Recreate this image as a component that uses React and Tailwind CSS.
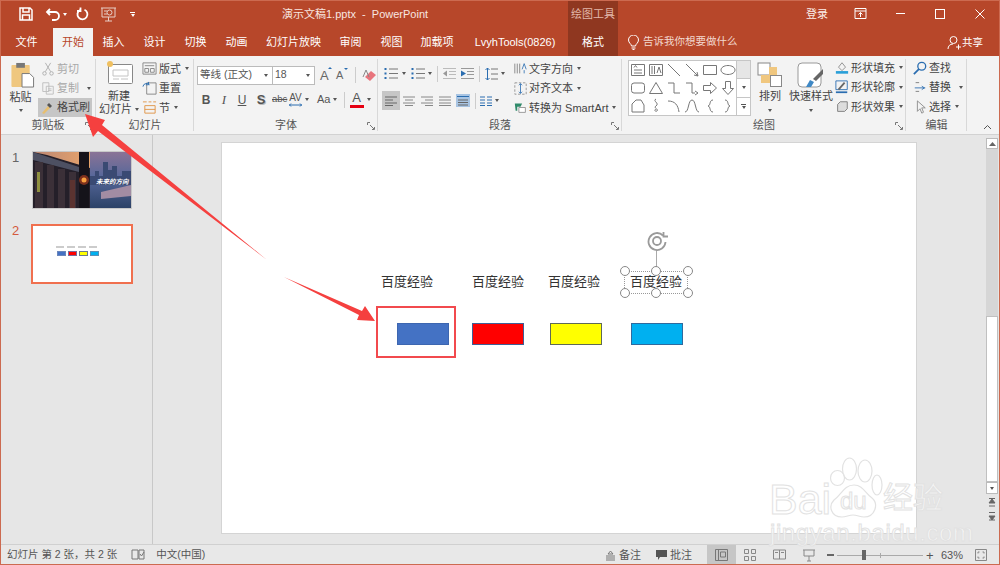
import React from "react";

const Cn = ({ children, className = "" }) => <span className={"whitespace-nowrap " + className}>{children}</span>;
const Caret = ({ className = "" }) => <span className={"inline-block w-0 h-0 border-l-[2.5px] border-r-[2.5px] border-t-[3px] border-l-transparent border-r-transparent border-t-[#555] align-middle shrink-0 " + className} />;
const CaretW = ({ className = "" }) => <span className={"inline-block w-0 h-0 border-l-[2.5px] border-r-[2.5px] border-t-[3px] border-l-transparent border-r-transparent border-t-white shrink-0 " + className} />;

const Tab = ({ children, active, w }) => (
  <div className={"flex items-center justify-center text-[11px] h-full " + (active ? "bg-[#f3f3f3] text-[#b7472a]" : "text-white")} style={{ width: w }}>{children}</div>
);

const Small = ({ icon, label, caret, dim, caretGap = "ml-[2px]" }) => (
  <div className={"flex items-center gap-[2px] h-[19.5px] text-[11px] " + (dim ? "text-[#a8a8a8]" : "text-[#444]")}>
    {icon}<Cn>{label}</Cn>{caret && <Caret className={caretGap} />}
  </div>
);

const Ico = ({ children, s = 16, vb = 16 }) => (
  <svg width={s} height={s} viewBox={`0 0 ${vb} ${vb}`} fill="none" stroke="#666" strokeWidth="1" className="shrink-0">{children}</svg>
);

const Launcher = () => (
  <svg width="8" height="8" viewBox="0 0 8 8" fill="none" stroke="#777" className="absolute right-[3px] bottom-[4px]"><path d="M.5 3V.5H3M7.500 5v2.500H5M3 3l4 4" /></svg>
);

const Group = ({ w, label, launcher, children }) => (
  <div className="relative flex flex-col h-full shrink-0" style={{ width: w }}>
    <div className="flex-1 min-h-0 flex">{children}</div>
    <div className="h-[15px] mb-[1px] flex items-center justify-center text-[11px] text-[#555]">{label}</div>
    <span className="absolute right-0 top-[3px] bottom-[3px] w-px bg-[#d8d8d8]" />
    {launcher && <Launcher />}
  </div>
);

const Shape = ({ d }) => (
  <svg width="18" height="18" viewBox="0 0 18 18" fill="none" stroke="#777" strokeWidth="1"><path d={d} /></svg>
);
const shapes = [
  "M2.500 3.500h13v11h-13zM5 6.500l1.500-2 1.500 2M5 9h8M5 12h8",
  "M2.500 3.500h13v11h-13zM5 5v8M7.500 5v8M10 12l2-6 2 6",
  "M3 3l12 12",
  "M3 3l12 12M15 15l-4-1M15 15l-1-4",
  "M2.500 4.500h13v9h-13z",
  "M9 4.500c4 0 7 2 7 4.500s-3 4.500-7 4.500-7-2-7-4.500 3-4.500 7-4.500z",
  "M5 4h8a2.500 2.500 0 012.500 2.500v5A2.500 2.500 0 0113 14H5a2.500 2.500 0 01-2.500-2.500v-5A2.500 2.500 0 015 4z",
  "M9 3.500l6.500 11h-13z",
  "M3 4h6v10h6",
  "M3 4h6v10h3M12 12l3 2-3 2",
  "M2.500 6.500h7v-3l6 5.500-6 5.500v-3h-7z",
  "M6.500 2.500h5v7h3L9 15.500 3.500 9.500h3z",
  "M3 15V7l4-4h5l3 5v7z",
  "M9 2c-4 2 4 4 0 7-3 2 3 3 1 5-2 1-3-1-1-2",
  "M3 4c7 0 10 4 11 11",
  "M2 15c4 0 3-12 7-12s3 12 7 12",
  "M12 3c-4 0-2 5.500-5 6 3 .5 1 6 5 6",
  "M6 3c4 0 2 5.500 5 6-3 .5-1 6-5 6",
];

const Thumb = ({ n, active, children }) => (
  <div className="flex h-[60px]">
    <div className={"w-[31px] pl-[12px] text-[13px] leading-none " + (active ? "text-[#d4593c]" : "text-[#666]")}>{n}</div>
    {children}
  </div>
);

const Label = ({ left }) => (
  <span className="absolute top-[130px] text-[13px] leading-[17px] text-[#333] whitespace-nowrap" style={{ left }}>百度经验</span>
);
const Box = ({ left, fill, stroke }) => (
  <div className="absolute top-[180px] w-[52px] h-[22px] border" style={{ left, background: fill, borderColor: stroke }} />
);
const Handle = ({ x, y }) => (
  <span className="absolute w-[10px] h-[10px] rounded-full bg-white border border-[#888]" style={{ left: x - 5, top: y - 5 }} />
);

function ArrowHeads() {
  return (
    <svg width="1000" height="565" viewBox="0 0 1000 565" className="absolute left-0 top-0 pointer-events-none">
      <path d="M267 260 L102 125 L105 120 L85 114 L93 137 L98 131 Z" fill="#f5403f" />
      <path d="M284 277 L362 311 L365 306 L375 321 L357 320 L359 315 Z" fill="#f5403f" />
    </svg>
  );
}

function Watermark() {
  const stroke = "[-webkit-text-stroke:1px_#e2e2e2]";
  return (
    <div className="absolute left-[766px] top-[455px] w-[200px] h-[95px] pointer-events-none">
      <svg width="62" height="66" viewBox="0 0 62 66" className="absolute left-[58px] top-0" fill="#ffffff" fillOpacity=".55" stroke="#e2e2e2" strokeWidth="1.200">
        <ellipse cx="13.500" cy="23" rx="7" ry="7.500" /><ellipse cx="25.500" cy="14" rx="7" ry="11" /><ellipse cx="41" cy="16" rx="7" ry="11" /><ellipse cx="53" cy="30" rx="5" ry="10" />
        <path d="M30 30c9 0 11 8 18 13 7 6 3 19-8 19-4 0-7-2-11-2-4 0-7 2-11 2-11 0-14-11-8-17 8-6 10-15 20-15z" />
      </svg>
      <span className={"absolute left-[3px] top-[23px] text-[43px] leading-[43px] font-['Liberation_Sans'] text-white/75 " + stroke}>Bai</span>
      <span className={"absolute left-[74px] top-[34px] text-[24px] leading-[24px] font-['Liberation_Sans'] text-white/80 " + stroke}>du</span>
      <span className={"absolute left-[117px] top-[27px] text-[30px] leading-[32px] text-white/70 " + stroke}>经验</span>
      <span className={"absolute left-[4px] top-[66px] text-[24px] leading-[24px] font-['Liberation_Sans'] text-white/70 tracking-[.6px] whitespace-nowrap " + stroke}>jingyan.baidu.com</span>
    </div>
  );
}

function Photo() {
  return (
    <div className="relative w-[98px] h-[56px] ml-[2px] mt-[1px] outline outline-1 outline-[#c8c8c8] overflow-hidden">
      <svg width="98" height="56" viewBox="0 0 98 56" className="block">
        <defs>
          <linearGradient id="s1" x1="0" y1="0" x2="1" y2="0"><stop offset="0" stopColor="#b98674" /><stop offset="1" stopColor="#e9a56c" /></linearGradient>
          <linearGradient id="s2" x1="0" y1="0" x2="0" y2="1"><stop offset="0" stopColor="#8a7396" /><stop offset=".45" stopColor="#56679a" /><stop offset="1" stopColor="#2c4267" /></linearGradient>
        </defs>
        <rect width="57" height="56" fill="#241f29" />
        <path d="M0 0h57v16L14 3z" fill="url(#s1)" />
        <path d="M0 0l46 15v5L0 8z" fill="#4d5062" />
        <path d="M2 10h8v46H2zM14 13h7v43h-7zM25 17h7v39h-7zM36 20h7v36h-7z" fill="#3b3038" />
        <path d="M4 20h3v20H4z" fill="#8f9040" />
        <path d="M37 28h5v28h-5z" fill="#5b3330" />
        <rect x="57" width="41" height="56" fill="url(#s2)" />
        <path d="M57 24h5v-5h4v5h4V10h5v8h4v-4h5v10h5v-5h9v14H57z" fill="#3a4a73" />
        <path d="M68 40l30-7v11l-30 3z" fill="#a28ca3" />
        <rect x="46" y="0" width="10" height="56" fill="#15131a" />
        <circle cx="51" cy="28" r="5" fill="#c2441f" fillOpacity=".6" />
        <circle cx="51" cy="28" r="2.500" fill="#f9a03f" />
      </svg>
      <span className="absolute left-[63px] top-[25px] text-[6.500px] leading-[9px] text-white italic font-bold whitespace-nowrap">未来的方向</span>
    </div>
  );
}

export default function App() {
  return (
    <div className="relative w-[1000px] h-[565px] overflow-hidden flex flex-col bg-[#e6e6e6] font-['Liberation_Sans','Noto_Sans_CJK_SC',sans-serif] select-none">
      {/* title bar */}
      <div className="h-[28px] bg-[#b7472a] flex items-center text-white shrink-0 relative">
        <div className="flex items-center w-[282px] pl-[19px] shrink-0">
          <svg width="14" height="14" viewBox="0 0 14 14" fill="none" stroke="#fff" strokeWidth="1.500"><path d="M1 1h10l2 2v10H1zM4 1v4h6V1M3.500 13V8h7v5" /></svg>
          <svg width="15" height="13" viewBox="0 0 15 13" fill="none" stroke="#fff" strokeWidth="1.800" className="ml-[12px]"><path d="M5 1L2 4l3 3M2 4h8a3.800 3.800 0 010 8H7" /></svg>
          <CaretW className="ml-[3px]" />
          <svg width="13" height="14" viewBox="0 0 13 14" fill="none" stroke="#fff" strokeWidth="1.800" className="ml-[9px]"><path d="M8.500 2.800a5 5 0 11-4.500.2M4.500 .5v3.500H1" /></svg>
          <svg width="15" height="15" viewBox="0 0 15 15" fill="none" stroke="#e8d0c8" strokeWidth="1" className="ml-[12px]"><path d="M0 1h15M1 1v9h13V1M7.500 10v4M4 14h7" /><circle cx="8.500" cy="5.500" r="2.500" /><path d="M3 4h3M3 7h3" /></svg>
          <div className="flex flex-col items-center gap-[1px] ml-[14px]"><span className="w-[5px] h-px bg-white" /><CaretW /></div>
        </div>
        <Cn className="text-[11px] text-[#f7e6e0]">演示文稿1.pptx&nbsp; -&nbsp; PowerPoint</Cn>
        <div className="absolute left-[568px] top-[1px] w-[50px] h-[27px] bg-[#8f3720] flex items-center justify-center text-[11px] text-[#e2b8ab]"><Cn>绘图工具</Cn></div>
        <Cn className="absolute left-[806px] top-[6px] text-[11px] text-[#fbeee9]">登录</Cn>
        <svg width="13" height="11" viewBox="0 0 13 11" fill="none" stroke="#fff" className="absolute left-[854px] top-[8px]"><path d="M1 .5h11v10H1zM1 3h11M6.500 9V4.500M4.500 6.500l2-2 2 2" /></svg>
        <span className="absolute left-[896px] top-[13px] w-[9px] h-px bg-white" />
        <span className="absolute left-[935px] top-[9px] w-[10px] h-[10px] border border-white" />
        <svg width="10" height="10" viewBox="0 0 10 10" stroke="#fff" className="absolute left-[975px] top-[9px]"><path d="M.5.5l9 9M9.500.5l-9 9" /></svg>
      </div>
      {/* tabs */}
      <div className="h-[28px] bg-[#b7472a] flex items-stretch shrink-0 relative">
        <Tab w={53}>文件</Tab>
        <Tab active w={40}>开始</Tab>
        <Tab w={41}>插入</Tab>
        <Tab w={41}>设计</Tab>
        <Tab w={41}>切换</Tab>
        <Tab w={41}>动画</Tab>
        <Tab w={73}>幻灯片放映</Tab>
        <Tab w={41}>审阅</Tab>
        <Tab w={41}>视图</Tab>
        <Tab w={50}>加载项</Tab>
        <Tab w={106}>LvyhTools(0826)</Tab>
        <div className="w-[50px] bg-[#8f3720] text-white text-[11px] flex items-center justify-center">格式</div>
        <div className="flex items-center ml-[10px] gap-[4px] text-[10.500px] text-[#f3d9d0]">
          <svg width="11" height="15" viewBox="0 0 11 15" fill="none" stroke="#fff"><path d="M3.500 11c0-2-3-3-3-6a5 5 0 0110 0c0 3-3 4-3 6zM3.500 13h4M4.500 14.500h2" /></svg>
          <Cn>告诉我你想要做什么</Cn>
        </div>
        <div className="absolute right-[17px] top-[7px] flex items-center gap-[1px] text-[10.500px] text-white">
          <svg width="14" height="15" viewBox="0 0 14 15" fill="none" stroke="#fff"><circle cx="6.500" cy="5" r="3.500" /><path d="M1 14c0-3 2-5 5-5M9 12h5M11.500 9.500v5" /></svg>
          <Cn>共享</Cn>
        </div>
      </div>
      {/* ribbon */}
      <div className="h-[79px] bg-[#f3f3f3] border-b border-[#d2d2d2] flex shrink-0 relative">
        <Group w={96} label="剪贴板" launcher>
          <div className="w-[41px] flex flex-col items-center pt-[6px] text-[11px] text-[#444] shrink-0">
            <svg width="25" height="26" viewBox="0 0 25 27" className="ml-[4px]"><rect x="1" y="3" width="19" height="23" rx="1" fill="#efc77f" /><rect x="6" y="1" width="9" height="5" fill="#777" /><path d="M12 12h8l4 4v10H12z" fill="#fff" stroke="#777" /></svg>
            <span className="mt-[1px] leading-[16px]">粘贴</span>
            <Caret className="mt-[4px]" />
          </div>
          <div className="flex flex-col pt-[3px]">
            <Small dim label="剪切" icon={<Ico s={14}><path d="M5 1l6 10M11 1L5 11" stroke="#aaa" /><circle cx="4" cy="13" r="2" stroke="#aaa" /><circle cx="12" cy="13" r="2" stroke="#aaa" /></Ico>} />
            <Small dim label="复制" caret caretGap="ml-[6px]" icon={<Ico s={14}><path d="M2 2h7v10H2zM6 6h8v9H6zM8 9h4M8 11h4" stroke="#bbb" /></Ico>} />
            <div className="flex items-center gap-[2px] h-[19px] w-[54px] ml-[-3px] bg-[#c6c6c6] text-[11px] text-[#444] pl-[3px]">
              <svg width="14" height="13" viewBox="0 0 14 13"><path d="M1 12l6-7 2 2-6 6z" fill="#e8bf6f" /><path d="M8 2l3 3-2 2-3-3z" fill="#555" /></svg>
              <Cn>格式刷</Cn>
            </div>
          </div>
        </Group>
        <Group w={98} label="幻灯片">
          <div className="w-[46px] flex flex-col items-center pt-[4px] text-[11px] text-[#444] leading-[13px] shrink-0">
            <svg width="27" height="25" viewBox="0 0 27 25" fill="none"><rect x="2.500" y="4.500" width="24" height="19" rx="1" fill="#fff" stroke="#888" /><path d="M7 10h15v6H7zM7 19h6M15 19h7" stroke="#c4c4c4" /><circle cx="4" cy="4" r="3" fill="#f0c060" /></svg>
            <Cn className="mt-[5px]">新建</Cn>
            <div className="flex items-center gap-[3px] whitespace-nowrap"><span>幻灯片</span><Caret /></div>
          </div>
          <div className="flex flex-col pt-[3px]">
            <Small label="版式" caret icon={<Ico s={15}><path d="M1 2h14v12H1zM3 5h10M3 8h4v4H3zM9 8h4v4H9z" stroke="#888" /></Ico>} />
            <Small label="重置" icon={<Ico s={15}><path d="M5 2h10v12H5z" stroke="#888" /><path d="M1 6a4 4 0 017-2M7 1v3H4" stroke="#2a6db0" /></Ico>} />
            <Small label="节" caret icon={<Ico s={15}><path d="M1 2h4M7 2h3M12 2h3M3 6h11v8H3zM3 10h11" stroke="#e0964a" /></Ico>} />
          </div>
        </Group>
        <Group w={184} label="字体" launcher>
          <div className="pl-[3px] pt-[9px] w-full">
            <div className="flex items-center h-[20px]">
              <div className="w-[76px] h-[19px] border border-[#bbb] bg-white text-[10.500px] text-[#555] flex items-center pl-[2px] justify-between pr-[4px] shrink-0"><Cn>等线 (正文)</Cn><Caret /></div>
              <div className="w-[42px] h-[19px] border border-l-0 border-[#bbb] bg-white text-[10.500px] text-[#555] flex items-center pl-[2px] justify-between pr-[4px] shrink-0"><span>18</span><Caret /></div>
              <span className="relative ml-[5px] w-[12px] text-[#666] text-[13px] leading-none">A<span className="absolute right-0 top-[-2px] w-0 h-0 border-l-[2px] border-r-[2px] border-b-[2px] border-l-transparent border-r-transparent border-b-[#2a6db0]" /></span>
              <span className="relative ml-[4px] w-[12px] text-[#666] text-[11px] leading-none">A<span className="absolute right-0 top-[-2px] w-0 h-0 border-l-[2px] border-r-[2px] border-t-[2px] border-l-transparent border-r-transparent border-t-[#2a6db0]" /></span>
              <span className="w-px h-[16px] bg-[#ccc] ml-[7px]" />
              <svg width="14" height="15" viewBox="0 0 14 15" className="ml-[6px]"><path d="M3 9l6-6 5 4-6 6z" fill="#e8747c" /><path d="M1 9l3-7 3 7" fill="none" stroke="#888" /></svg>
            </div>
            <div className="flex items-center h-[19px] mt-[5px] text-[#555]">
              <span className="w-[18px] text-center text-[12px] font-bold">B</span>
              <span className="w-[18px] text-center text-[13px] italic font-['Liberation_Serif']">I</span>
              <span className="w-[18px] text-center text-[12px] underline">U</span>
              <span className="w-[20px] text-center text-[13px] font-bold [text-shadow:1px_1px_0_#bbb]">S</span>
              <span className="w-[14px] ml-[1px] text-center line-through text-[9.500px]">abc</span>
              <div className="ml-[1px] w-[26px] flex items-center gap-[3px] pl-[2px]">
                <div className="flex flex-col items-center">
                  <span className="text-[10px] leading-[10px]">AV</span>
                  <svg width="13" height="4" viewBox="0 0 13 4" fill="none" stroke="#2a6db0"><path d="M0 2h13M2 .5L.5 2 2 3.500M11 .5L12.500 2 11 3.500" /></svg>
                </div>
                <Caret />
              </div>
              <div className="ml-[1px] w-[25px] flex items-center gap-[3px] pl-[3px] text-[11px]">Aa<Caret /></div>
              <span className="w-px h-[16px] bg-[#ccc] ml-[5px]" />
              <div className="flex flex-col items-center ml-[4px] w-[15px]">
                <span className="text-[13px] leading-[12px] text-[#555]">A</span>
                <span className="w-[14px] h-[3px] bg-[#e60012] mt-[1px]" />
              </div>
              <Caret className="ml-[3px]" />
            </div>
          </div>
        </Group>
        <Group w={244} label="段落" launcher>
          <div className="pl-[6px] pt-[7px] w-[136px] shrink-0">
            <div className="flex items-center h-[21px]">
              <svg width="14" height="13" viewBox="0 0 14 13" fill="none" stroke="#777" className="shrink-0"><path d="M5 2h9M5 6.500h9M5 11h9" /><path d="M1.500 1v2M1.500 5.500v2M1.500 10v2" stroke="#2a6db0" strokeWidth="2" /></svg>
              <Caret className="ml-[4px]" />
              <svg width="14" height="13" viewBox="0 0 14 13" fill="none" stroke="#777" className="ml-[5px] shrink-0"><path d="M5 2h9M5 6.500h9M5 11h9" /><path d="M1.500 1v2M1.500 5.500v2M1.500 10v2" stroke="#2a6db0" strokeWidth="2" /></svg>
              <Caret className="ml-[3px]" />
              <span className="w-px h-[16px] bg-[#ccc] ml-[5px] shrink-0" />
              <svg width="13" height="12" viewBox="0 0 13 12" fill="none" stroke="#bbb" className="ml-[5px] shrink-0"><path d="M0 .5h13M6 3.500h7M6 6.500h7M0 10.500h13" /><path d="M0 5.500l4-3v6z" fill="#999" stroke="none" /></svg>
              <svg width="13" height="12" viewBox="0 0 13 12" fill="none" stroke="#999" className="ml-[5px] shrink-0"><path d="M0 .5h13M6 3.500h7M6 6.500h7M0 10.500h13" /><path d="M5 5.500l-5-3v6z" fill="#2a6db0" stroke="none" /></svg>
              <span className="w-px h-[16px] bg-[#ccc] ml-[5px] shrink-0" />
              <svg width="13" height="14" viewBox="0 0 13 14" fill="none" stroke="#777" className="ml-[5px] shrink-0"><path d="M6 2h7M6 7h7M6 12h7" /><path d="M2.500 1v12M.5 3l2-2 2 2M.5 11l2 2 2-2" stroke="#2a6db0" /></svg>
              <Caret className="ml-[3px]" />
            </div>
            <div className="flex items-center h-[19px] mt-[7px] ml-[-2px]">
              <div className="w-[18px] h-[19px] bg-[#c6c6c6] flex items-center justify-center shrink-0"><svg width="12" height="10" viewBox="0 0 12 10" stroke="#666"><path d="M0 1h12M0 4h8M0 7h12M0 9.500h8" /></svg></div>
              <svg width="12" height="10" viewBox="0 0 12 10" stroke="#888" className="ml-[3px] shrink-0"><path d="M0 1h12M2 4h8M0 7h12M2 9.500h8" /></svg>
              <svg width="12" height="10" viewBox="0 0 12 10" stroke="#888" className="ml-[6px] shrink-0"><path d="M0 1h12M4 4h8M0 7h12M4 9.500h8" /></svg>
              <svg width="12" height="10" viewBox="0 0 12 10" stroke="#888" className="ml-[6px] shrink-0"><path d="M0 1h12M0 4h12M0 7h12M0 9.500h12" /></svg>
              <svg width="14" height="13" viewBox="0 0 14 13" className="ml-[5px] shrink-0"><rect width="14" height="13" fill="#a8c4e2" /><path d="M2 6h10M2 8.500h10M2 11h10" stroke="#666" /><path d="M1 2.500h12" stroke="#2a6db0" /></svg>
              <span className="w-px h-[16px] bg-[#ccc] ml-[5px] shrink-0" />
              <svg width="12" height="10" viewBox="0 0 12 10" stroke="#2a6db0" className="ml-[4px] shrink-0"><path d="M0 1h5M7 1h5M0 4h5M7 4h5M0 7h5M7 7h5M0 9.500h5M7 9.500h5" /></svg>
              <Caret className="ml-[3px]" />
            </div>
          </div>
          <div className="flex flex-col pt-[3px]">
            <Small label="文字方向" caret icon={<Ico s={13}><path d="M1 2v12M4 2v12M7 2v12" stroke="#777" /><path d="M10 9l2.500-7L15 9M12.500 10v4" stroke="#2a6db0" /></Ico>} />
            <Small label="对齐文本" caret icon={<Ico s={13}><path d="M1 1h14v14H1z" stroke="#888" strokeDasharray="3 2" /><path d="M8 2v12M6 4l2-2 2 2M6 12l2 2 2-2" stroke="#2a6db0" /></Ico>} />
            <Small label="转换为 SmartArt" caret icon={<Ico s={13}><path d="M1 3h9l-2 4H4v5H2z" fill="#2f8a6a" stroke="none" /><path d="M6 8h8v6H6z" fill="#fff" stroke="#888" /></Ico>} />
          </div>
        </Group>
        <Group w={284} label="绘图" launcher>
          <div className="flex pl-[6px] pt-[4px] w-full">
            <div className="w-[109px] h-[56px] border border-[#c6c6c6] bg-white grid grid-cols-[repeat(6,18px)] content-start shrink-0">
              {shapes.map((d, i) => <Shape key={i} d={d} />)}
            </div>
            <div className="w-[14px] h-[56px] border-y border-r border-[#c6c6c6] flex flex-col bg-white shrink-0">
              <div className="flex-1 bg-[#e6e6e6] border-b border-[#c6c6c6]" />
              <div className="flex-1 flex items-center justify-center border-b border-[#c6c6c6]"><Caret /></div>
              <div className="flex-1 flex flex-col items-center justify-center gap-[1px]"><span className="w-[5px] h-px bg-[#555]" /><Caret /></div>
            </div>
            <div className="w-[38px] flex flex-col items-center pt-[2px] text-[11px] text-[#444] shrink-0">
              <svg width="26" height="25" viewBox="0 0 26 25"><rect x="1" y="1" width="12" height="12" fill="#fff" stroke="#888" /><rect x="12" y="5" width="8" height="8" fill="#f0c77f" /><rect x="4" y="13" width="9" height="8" fill="#f0c77f" /><rect x="13.500" y="13.500" width="11" height="11" fill="#fff" stroke="#888" /></svg>
              <Cn className="mt-[1px] leading-[16px]">排列</Cn>
              <Caret className="mt-[5px]" />
            </div>
            <div className="w-[44px] flex flex-col items-center pt-[2px] text-[11px] text-[#444] shrink-0">
              <svg width="28" height="26" viewBox="0 0 28 26"><rect x="1" y="1" width="23" height="24" rx="4" fill="#fff" stroke="#999" /><path d="M9 25l4-7 4 2-3 5z" fill="#3f88c5" /><path d="M16 17l10-10v5l-7 7z" fill="#666" /></svg>
              <Cn className="leading-[16px]">快速样式</Cn>
              <Caret className="mt-[5px]" />
            </div>
            <div className="flex flex-col ml-[2px] mt-[-2px]">
              <Small label="形状填充" caret icon={<Ico s={14}><path d="M4 7l4-5 4 5-4 4z" stroke="#888" /><path d="M1 13h14" stroke="#2a9fd8" strokeWidth="3" /></Ico>} />
              <Small label="形状轮廓" caret icon={<Ico s={14}><path d="M1 14h13" stroke="#2a6db0" strokeWidth="2" /><path d="M1 1h13v10H1z" stroke="#2a6db0" /><path d="M4 11l7-8" stroke="#666" strokeWidth="2" /></Ico>} />
              <Small label="形状效果" caret icon={<Ico s={14}><path d="M3 5l3-3h8v8l-3 3H3z" fill="#ddd" stroke="#777" /></Ico>} />
            </div>
          </div>
        </Group>
        <Group w={61} label="编辑">
          <div className="flex flex-col pt-[2px] pl-[7px]">
            <Small label="查找" icon={<Ico s={14}><circle cx="10" cy="6" r="4.500" stroke="#2a6db0" strokeWidth="1.500" /><path d="M7 9l-6 6" stroke="#2a6db0" strokeWidth="2" /></Ico>} />
            <Small label="替换" caret caretGap="ml-[6px]" icon={<Ico s={14}><path d="M2 9h12M10 7l3 2-3 2" stroke="#2a6db0" /><path d="M3 3h4M3 13h4" stroke="#777" /></Ico>} />
            <Small label="选择" caret icon={<Ico s={14}><path d="M5 1v12l3-3 2 5 2-1-2-5h4z" stroke="#888" /></Ico>} />
          </div>
        </Group>
        <svg width="9" height="6" viewBox="0 0 9 6" fill="none" stroke="#555" className="ml-[16px] mt-[68px]"><path d="M1 5l3.500-3.500L8 5" /></svg>
      </div>
      {/* main */}
      <div className="flex-1 min-h-0 flex">
        <div className="w-[153px] border-r border-[#c8c8c8] flex flex-col gap-[13px] pt-[16px] shrink-0">
          <Thumb n="1"><Photo /></Thumb>
          <Thumb n="2" active>
            <div className="w-[102px] h-[60px] border-2 border-[#f0704f] bg-white relative">
              <div className="absolute left-[23px] top-[20px] flex gap-[3px]">
                {[0, 1, 2, 3].map(i => <span key={i} className="w-[8px] h-[2px] bg-[#ccc]" />)}
              </div>
              <div className="absolute left-[24px] top-[25px] flex gap-[2px]">
                <span className="w-[9px] h-[5px] bg-[#4472c4] border border-[#6a86bb]" /><span className="w-[9px] h-[5px] bg-[#ff0000] border border-[#7a6a9a]" /><span className="w-[9px] h-[5px] bg-[#ffff00] border border-[#6c7a8a]" /><span className="w-[9px] h-[5px] bg-[#00b0f0] border border-[#5a8fb5]" />
              </div>
            </div>
          </Thumb>
        </div>
        <div className="flex-1 flex min-w-0">
          <div className="flex-1 pl-[68px] pt-[7px]">
            <div className="relative w-[696px] h-[392px] bg-white border border-[#d4d4d4]">
              <Label left={159} /><Label left={250} /><Label left={326} /><Label left={408} />
              <Box left={175} fill="#4472c4" stroke="#3d66b0" />
              <Box left={250} fill="#ff0000" stroke="#3f5f96" />
              <Box left={328} fill="#ffff00" stroke="#5e6a55" />
              <Box left={409} fill="#00b0f0" stroke="#2f6a9e" />
              <span className="absolute left-[154px] top-[163px] w-[80px] h-[52px] border-2 border-[#f24a4e]" />
              <span className="absolute left-[402px] top-[128px] w-[64px] h-[23px] border border-dotted border-[#999]" />
              <span className="absolute left-[434px] top-[107px] w-px h-[21px] bg-[#aaa]" />
              <Handle x={402.500} y={128} /><Handle x={434} y={128} /><Handle x={466} y={128} />
              <Handle x={402.500} y={150} /><Handle x={434} y={150} /><Handle x={466} y={150} />
              <svg width="24" height="20" viewBox="0 0 24 20" fill="none" stroke="#9a9a9a" strokeWidth="1.800" className="absolute left-[424px] top-[88px]"><path d="M19.500 11a8.500 8.500 0 11-2.500-6.500" /><circle cx="11" cy="10" r="4" /><path d="M17.500 1v4.500H22" /></svg>
            </div>
          </div>
          <div className="w-[12px] mr-[2px] shrink-0 flex flex-col items-center pt-[3px]">
            <div className="w-[12px] h-[11px] bg-white border border-[#bbb] flex items-center justify-center"><svg width="7" height="4" viewBox="0 0 7 4"><path d="M0 4l3.500-4L7 4z" fill="#666" /></svg></div>
            <div className="w-[12px] h-[167px] bg-[#d6d6d6]" />
            <div className="w-[12px] h-[166px] bg-white border border-[#c0c0c0]" />
            <div className="w-[12px] h-[12px] bg-white border border-[#bbb] flex items-center justify-center"><Caret /></div>
            <svg width="8" height="9" viewBox="0 0 8 9" className="mt-[4px]"><path d="M1 .5h6M4 1L1 5h6zM1 8h6" stroke="#666" fill="#666" /></svg>
            <svg width="8" height="9" viewBox="0 0 8 9" className="mt-[5px]"><path d="M1 .5h6M4 8L1 4h6zM1 8h6" stroke="#666" fill="#666" /></svg>
          </div>
        </div>
      </div>
      {/* status */}
      <div className="h-[21px] bg-[#e8e8e8] border-t border-[#d0d0d0] flex items-center text-[10.500px] text-[#555] shrink-0">
        <Cn className="ml-[7px]">幻灯片 第 2 张，共 2 张</Cn>
        <svg width="14" height="12" viewBox="0 0 14 12" fill="none" stroke="#777" className="ml-[14px]"><path d="M1 1h6v9H1zM8 1h5v9H8zM9 5l1.500 2L13 3" /></svg>
        <Cn className="ml-[11px]">中文(中国)</Cn>
        <div className="ml-auto flex items-center h-full">
          <svg width="11" height="11" viewBox="0 0 11 11" stroke="#777" fill="none"><path d="M5.500 1L3 4h5zM1 6h9M1 8h9M1 10h9" /></svg>
          <Cn className="ml-[3px] text-[11px]">备注</Cn>
          <svg width="13" height="12" viewBox="0 0 13 12" className="ml-[14px]"><path d="M1 1h11v7H5l-2 3V8H1z" fill="#555" /></svg>
          <Cn className="ml-[2px] text-[11px]">批注</Cn>
          <div className="ml-[15px] w-[29px] h-full bg-[#c6c6c6] flex items-center justify-center"><svg width="13" height="12" viewBox="0 0 13 12" fill="none" stroke="#777"><path d="M.5.5h12v11H.5zM3.500.5v11M5.500 3h5v5h-5z" /></svg></div>
          <svg width="12" height="12" viewBox="0 0 12 12" fill="none" stroke="#888" className="ml-[8px]"><path d="M.5.5h4v4h-4zM7.500.5h4v4h-4zM.5 7.500h4v4h-4zM7.500 7.500h4v4h-4z" /></svg>
          <svg width="13" height="12" viewBox="0 0 13 12" fill="none" stroke="#888" className="ml-[17px]"><path d="M.5 1h12v9H.5zM6.500 1v9M2 3.500h3M8 3.500h3" /></svg>
          <svg width="12" height="13" viewBox="0 0 12 13" fill="none" stroke="#888" className="ml-[17px]"><path d="M0 1h12M1 1v6h10V1M6 7v5M4 12h4" /></svg>
          <span className="ml-[12px] w-[7px] h-[2px] bg-[#666]" />
          <div className="relative w-[86px] h-px bg-[#aaa] ml-[3px]">
            <span className="absolute left-[25px] top-[-5px] w-[4px] h-[10px] bg-[#666]" />
            <span className="absolute left-[43px] top-[-2px] w-px h-[5px] bg-[#aaa]" />
          </div>
          <span className="ml-[3px] w-[7px] text-[13px] leading-none">+</span>
          <Cn className="ml-[8px] w-[22px] text-[11px]">63%</Cn>
          <svg width="12" height="12" viewBox="0 0 12 12" fill="none" stroke="#888" className="ml-[12px] mr-[13px]"><path d="M.5.5h11v11H.500zM3 3h1.500M3 3v1.500M9 3H7.500M9 3v1.500M3 9h1.500M3 9V7.500M9 9H7.500M9 9V7.500" /></svg>
        </div>
      </div>
      {/* annotations */}
      <ArrowHeads />
      <Watermark />
      <span className="absolute inset-0 border border-[#cc6a50] pointer-events-none" />
    </div>
  );
}
